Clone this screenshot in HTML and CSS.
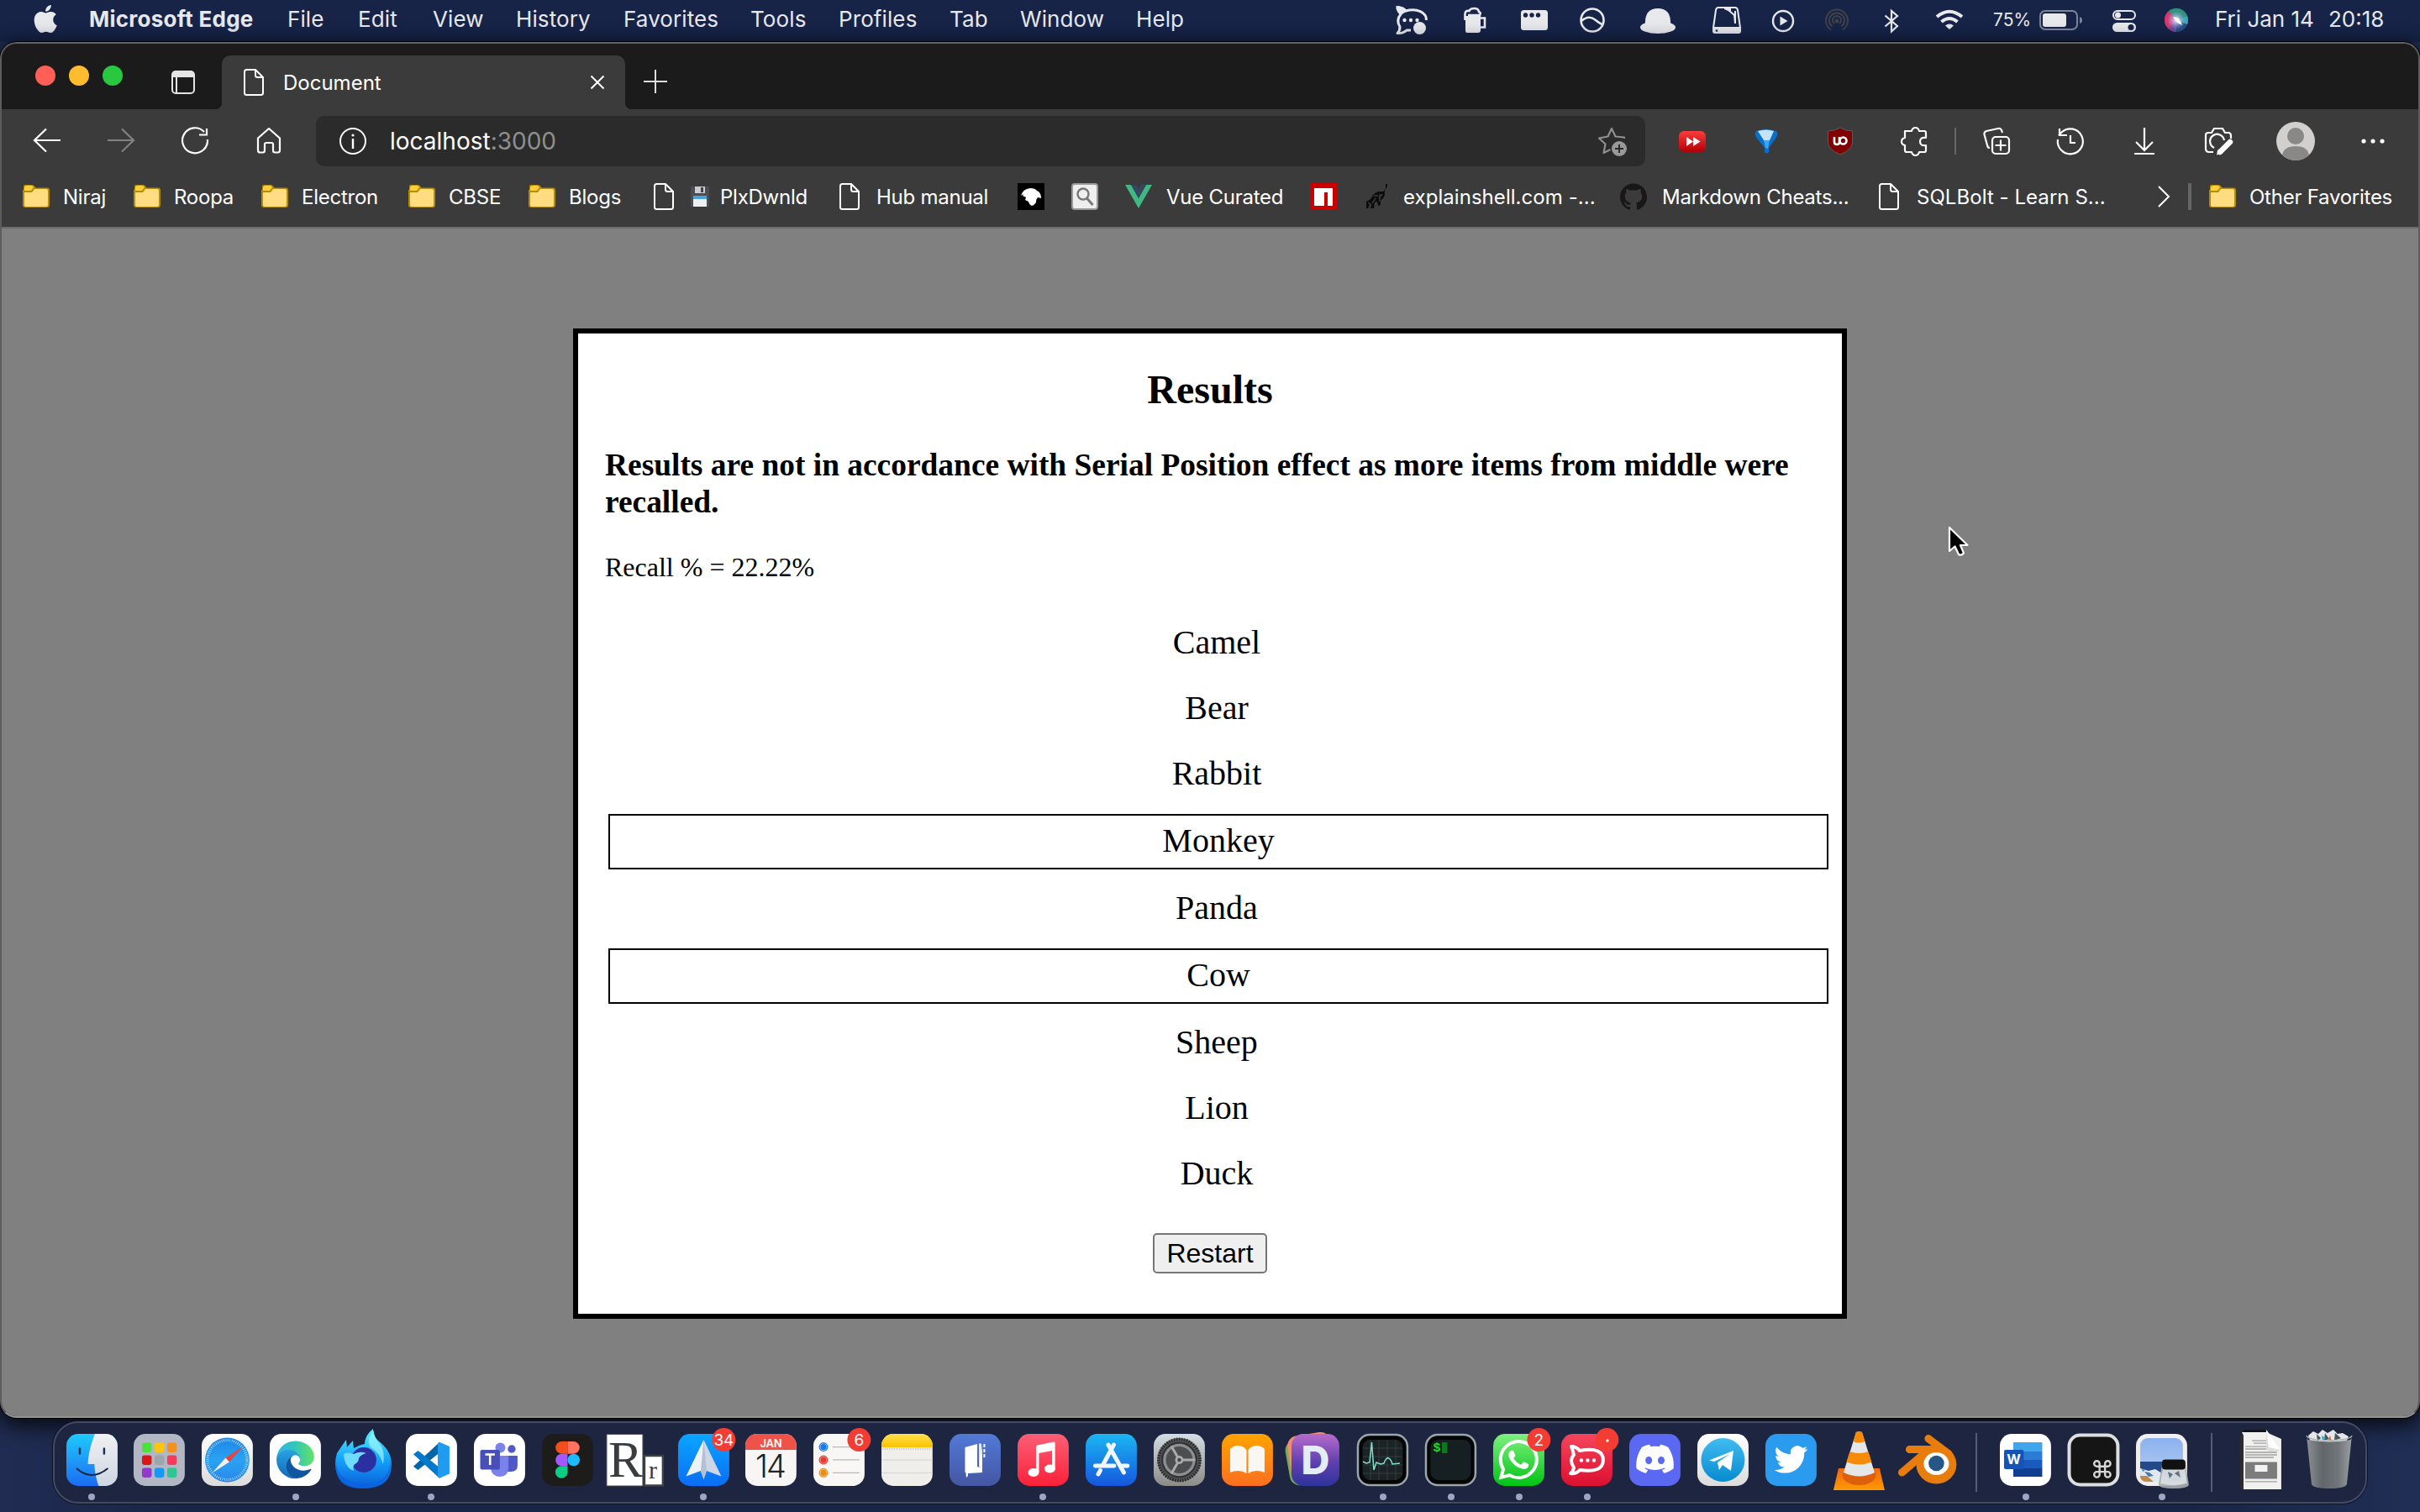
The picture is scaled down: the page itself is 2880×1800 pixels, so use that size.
FILE: index.html
```html
<!DOCTYPE html>
<html lang="en">
<head>
<meta charset="utf-8">
<title>Document</title>
<link rel="stylesheet" href="styles.css">
</head>
<body>
<svg class="defs" width="0" height="0" aria-hidden="true">
  <defs>
    <linearGradient id="gFinder" x2="0" y2="1"><stop stop-color="#1fcafd"/><stop offset="1" stop-color="#1b6df3"/></linearGradient>
    <linearGradient id="gFace" x2="0" y2="1"><stop stop-color="#f1f1f3"/><stop offset="1" stop-color="#cdd6e3"/></linearGradient>
    <linearGradient id="gWhite" x2="0" y2="1"><stop stop-color="#fff"/><stop offset="1" stop-color="#dcdcdc"/></linearGradient>
    <linearGradient id="gSafari" x2="0" y2="1"><stop stop-color="#1f86e4"/><stop offset=".5" stop-color="#2aa3f4"/><stop offset="1" stop-color="#2a86ea"/></linearGradient>
    <linearGradient id="gEdge" x2="1" y2="0"><stop stop-color="#2cb6ea"/><stop offset=".5" stop-color="#34c6b8"/><stop offset="1" stop-color="#62e464"/></linearGradient>
    <linearGradient id="gEdge2" x2="0" y2="1"><stop stop-color="#2aa5e4"/><stop offset="1" stop-color="#1568b8"/></linearGradient>
    <linearGradient id="gFox" x2="0" y2="1"><stop stop-color="#5ef0ff"/><stop offset=".5" stop-color="#16a4fb"/><stop offset="1" stop-color="#0a5cd8"/></linearGradient>
    <linearGradient id="gSpark" x2="0" y2="1"><stop stop-color="#0ba6ff"/><stop offset="1" stop-color="#0a6df5"/></linearGradient>
    <linearGradient id="gYellow" x2="0" y2="1"><stop stop-color="#ffdf4a"/><stop offset="1" stop-color="#fdc202"/></linearGradient>
    <linearGradient id="gBlueBook" x2="0" y2="1"><stop stop-color="#527ad8"/><stop offset="1" stop-color="#4456a2"/></linearGradient>
    <linearGradient id="gMusic" x2="0" y2="1"><stop stop-color="#fb5f77"/><stop offset="1" stop-color="#fa2139"/></linearGradient>
    <linearGradient id="gStore" x2="0" y2="1"><stop stop-color="#1bb6f4"/><stop offset="1" stop-color="#1657dc"/></linearGradient>
    <linearGradient id="gGrey" x2="0" y2="1"><stop stop-color="#d3dde3"/><stop offset="1" stop-color="#8d8b88"/></linearGradient>
    <linearGradient id="gBooks" x2="0" y2="1"><stop stop-color="#ffa300"/><stop offset="1" stop-color="#fb6f20"/></linearGradient>
    <linearGradient id="gDash" x2="0" y2="1"><stop stop-color="#b66ccb"/><stop offset=".55" stop-color="#5f3fb0"/><stop offset="1" stop-color="#2e339c"/></linearGradient>
    <linearGradient id="gWa" x2="0" y2="1"><stop stop-color="#7ff07f"/><stop offset="1" stop-color="#00c414"/></linearGradient>
    <linearGradient id="gRocket" x2="0" y2="1"><stop stop-color="#f5455c"/><stop offset="1" stop-color="#dc1030"/></linearGradient>
    <linearGradient id="gTele" x2="0" y2="1"><stop stop-color="#41bcf1"/><stop offset="1" stop-color="#078bd0"/></linearGradient>
    <linearGradient id="gTrash" x2="1" y2="0"><stop stop-color="#8b9094"/><stop offset=".35" stop-color="#60666a"/><stop offset=".7" stop-color="#6f7578"/><stop offset="1" stop-color="#9a9fa2"/></linearGradient>
    <linearGradient id="gBase" x2="0" y2="1"><stop stop-color="#f0680e"/><stop offset="1" stop-color="#fd9a05"/></linearGradient>
    <linearGradient id="gSky" x2="0" y2="1"><stop stop-color="#8bb1ee"/><stop offset="1" stop-color="#b7d0f2"/></linearGradient>
    <linearGradient id="gRed" x2="0" y2="1"><stop stop-color="#fb3d3d"/><stop offset="1" stop-color="#b00006"/></linearGradient>
    <radialGradient id="gSiri"><stop stop-color="#fff"/><stop offset=".35" stop-color="#c9b8ee" stop-opacity=".8"/><stop offset="1" stop-color="#8fa8e8" stop-opacity="0"/></radialGradient>
    <clipPath id="tile"><rect x="10" y="13" width="61" height="62" rx="14"/></clipPath>
    <symbol id="folder" viewBox="0 0 34 34">
      <path d="M2 9V5q0-2 2-2h8q2 0 3 1.500l1.500 2H30q3 0 3 3V27q0 3-3 3H4q-3 0-3-3V9z" fill="#b58a0b"/>
      <path d="M3 7q0-3 3-3h5q2 0 3 2l-3 4H3z" fill="#f9cf3a"/>
      <path d="M3 12h9l3-4h14q2 0 2 2v17q0 2-2 2H5q-2 0-2-2z" fill="#ffdd80"/>
    </symbol>
    <symbol id="page" viewBox="0 0 26 34">
      <path d="M4.500 2H15l9 9v18.500q0 2.500-2.500 2.500h-17Q2 32 2 29.500v-25Q2 2 4.500 2zM15 2v6.500q0 2.500 2.500 2.500H24" fill="none" stroke="#fff" stroke-width="2" stroke-linejoin="round"/>
    </symbol>
  </defs>
</svg>

<header class="menubar">
  <nav class="menus">
    <svg class="apple" width="29" height="33" viewBox="1 0 21 24" preserveAspectRatio="none"><path fill="#e7e9ed" d="M12.152 6.896c-.948 0-2.415-1.078-3.960-1.040-2.040.027-3.910 1.183-4.961 3.014-2.117 3.675-.546 9.103 1.519 12.090 1.013 1.454 2.208 3.090 3.792 3.039 1.520-.065 2.090-.987 3.935-.987 1.831 0 2.350.987 3.960.948 1.637-.026 2.676-1.480 3.676-2.948 1.156-1.688 1.636-3.325 1.662-3.415-.039-.013-3.182-1.221-3.220-4.857-.026-3.040 2.480-4.494 2.597-4.559-1.429-2.090-3.623-2.324-4.390-2.376-2-.156-3.675 1.090-4.610 1.090zM15.530 3.830c.843-1.012 1.400-2.427 1.245-3.830-1.207.052-2.662.805-3.532 1.818-.780.896-1.454 2.338-1.273 3.714 1.338.104 2.715-.688 3.559-1.701"/></svg>
    <b>Microsoft Edge</b><span>File</span><span>Edit</span><span>View</span><span>History</span><span>Favorites</span><span>Tools</span><span>Profiles</span><span>Tab</span><span>Window</span><span>Help</span>
  </nav>
  <div class="status">
    <svg width="44" height="49" viewBox="0 0 44 49" fill="none" stroke="#e7e9ed" stroke-width="3"><path d="M4.500 8.500Q12 9 15 13C28 9 40 15 39.500 24M4.500 8.500Q6 14 9 17Q3 24 8 32Q8 37 5 39.500Q12 40 16 36H21" stroke-linejoin="round"/><g fill="#e7e9ed" stroke="none"><path d="M3 7q9 0 14 6l-8 5z"/><circle cx="13.500" cy="24" r="2.200"/><circle cx="21" cy="24" r="2.200"/><circle cx="28.500" cy="24" r="2.200"/><circle cx="31.500" cy="33.500" r="7.500"/></g></svg>
    <svg width="44" height="49" viewBox="0 0 44 49" fill="none" stroke="#e7e9ed"><path d="M11 19h18v17q0 3-3 3H13q-2 0-2-3z" fill="#e7e9ed" stroke="none"/><path d="M10.500 24V17q0-5 5-4 1-3 6-3 5 0 5.500 4 3 1 1 4H14" stroke-width="2.600"/><path d="M29 21.500h5v11h-5" stroke-width="2.600"/></svg>
    <svg width="44" height="49" viewBox="0 0 44 49"><rect x="6" y="12" width="32" height="24" rx="3.500" fill="#e7e9ed"/><g fill="#172448"><circle cx="11.500" cy="18" r="2.700"/><circle cx="19" cy="18" r="2.700"/><circle cx="26.500" cy="18" r="2.700"/></g></svg>
    <svg width="44" height="49" viewBox="0 0 44 49" fill="none" stroke="#e7e9ed" stroke-width="2.600"><circle cx="22" cy="24" r="13.500"/><path d="M9 25q9-8 17-1 5 4 8 5"/></svg>
    <svg width="44" height="49" viewBox="0 0 44 49" fill="#e7e9ed"><path d="M7 29Q6 10 22 10T37 29z"/><ellipse cx="22" cy="32.500" rx="21" ry="7.500"/></svg>
    <svg width="44" height="49" viewBox="0 0 44 49"><path d="M12 9h20q2.500 0 3 3l3 21H6l3-21q.500-3 3-3z" fill="none" stroke="#e7e9ed" stroke-width="2"/><path d="M5 35q0-3 3-3h28q3 0 3 3v2q0 3-3 3H8q-3 0-3-3zM19 9h8v4q-2 1-8-2z" fill="#e7e9ed"/><path d="M24 12l7 6 1 10V13" fill="none" stroke="#e7e9ed" stroke-width="2"/><circle cx="10" cy="36.500" r="1.300" fill="#172448"/></svg>
    <svg width="44" height="49" viewBox="0 0 44 49"><circle cx="22" cy="25" r="12" fill="none" stroke="#e7e9ed" stroke-width="2.400"/><path d="M18.500 19.500v11l9-5.500z" fill="#e7e9ed"/></svg>
    <svg width="44" height="49" viewBox="0 0 44 49" fill="none" stroke="#414148" stroke-width="2"><path d="M15 35.500a13 13 0 1 1 14 0M16.500 31.500a9 9 0 1 1 11 0M19 28a5 5 0 1 1 6 0"/><circle cx="22" cy="25" r="1.500" fill="#414148"/></svg>
    <svg width="44" height="49" viewBox="0 0 44 49" fill="none" stroke="#e7e9ed" stroke-width="2.200"><path d="M14.500 18.500L29 31l-7 6.500V13l7 6L14.500 31.500"/></svg>
    <svg width="44" height="49" viewBox="0 0 44 49" fill="none" stroke="#e7e9ed" stroke-width="4"><path d="M7 20q15-12.500 30 0M12.500 26q9.500-8 19 0"/><path d="M17 30.500q5-4 10 0l-5 4.500z" fill="#e7e9ed" stroke="none"/></svg>
    <span class="pct">75%</span>
    <svg width="52" height="49" viewBox="0 0 52 49"><rect x="1" y="13" width="44" height="22" rx="6" fill="none" stroke="#7d859b" stroke-width="2"/><rect x="4" y="16" width="28" height="16" rx="3" fill="#e7e9ed"/><path d="M48 20q3 1 3 4t-3 4z" fill="#7d859b"/></svg>
    <svg width="44" height="49" viewBox="0 0 44 49"><rect x="9" y="13" width="26" height="10" rx="5" fill="none" stroke="#e7e9ed" stroke-width="2"/><circle cx="14.500" cy="18" r="3.500" fill="#e7e9ed"/><rect x="8" y="27" width="28" height="11" rx="5.500" fill="#e7e9ed"/><circle cx="30" cy="32.500" r="3.500" fill="#172448"/></svg>
    <svg width="44" height="49" viewBox="0 0 44 49"><circle cx="22" cy="24" r="14" fill="#2a4f86"/><path d="M22 24L13 34.500A14 14 0 0 1 13 13z" fill="#d8386c"/><path d="M22 24l-9-11A14 14 0 0 1 35 19z" fill="#2f9479"/><path d="M22 24l13-5q2 5 0 10z" fill="#38a9b5"/><path d="M22 24l-9 10.500q4 3.500 9 3.500z" fill="#744a9e"/><circle cx="22" cy="24" r="11" fill="url(#gSiri)"/><path d="M18 20l6 1 3 4 2 5-6-3z" fill="#fff"/></svg>
    <span>Fri Jan 14</span><span>20:18</span>
  </div>
</header>

<section class="window">
  <div class="titlebar">
    <div class="lights"><i class="close"></i><i class="min"></i><i class="max"></i></div>
    <svg class="spaces" width="28" height="28" viewBox="0 0 28 28"><rect x="1" y="1" width="26" height="26" rx="4" fill="none" stroke="#e4e4e4" stroke-width="2"/><path d="M1 8V5q0-4 4-4h18q4 0 4 4v3zM7 8v19H5V8z" fill="#e4e4e4"/></svg>
    <div class="tab">
      <svg width="26" height="34"><use href="#page"/></svg>
      <span>Document</span>
      <svg class="x" width="18" height="18" viewBox="0 0 18 18"><path d="M1.500 1.500l15 15m0-15l-15 15" stroke="#fff" stroke-width="2"/></svg>
    </div>
    <svg class="plus" width="28" height="28" viewBox="0 0 28 28"><path d="M14 0v28M0 14h28" stroke="#ddd" stroke-width="2"/></svg>
  </div>

  <div class="toolbar">
    <div class="nav">
      <svg width="44" height="44" viewBox="0 0 44 44"><path d="M38 21H8M21 7.500L7 21l14 13.500" fill="none" stroke="#fff" stroke-width="2.200"/></svg>
      <svg width="44" height="44" viewBox="0 0 44 44"><path d="M6 21h30M23 7.500L37 21 23 34.500" fill="none" stroke="#828282" stroke-width="2.200"/></svg>
      <svg width="44" height="44" viewBox="0 0 44 44"><path d="M37 20A15 15 0 1 1 33 11M36 7v7.500h-9" fill="none" stroke="#fff" stroke-width="2.200"/></svg>
      <svg width="44" height="44" viewBox="0 0 44 44"><path d="M9 18.500L22 7l13 11.500V33q0 2.500-2.500 2.500H29q-2 0-2-2.500v-7q0-2-2-2h-6q-2 0-2 2v7q0 2.500-2 2.500h-3.500Q9 35.500 9 33z" fill="none" stroke="#fff" stroke-width="2.200" stroke-linejoin="round"/></svg>
    </div>
    <div class="address">
      <svg width="44" height="44" viewBox="0 0 44 44"><circle cx="22" cy="22" r="15" fill="none" stroke="#fff" stroke-width="2"/><path d="M22 19v12" stroke="#fff" stroke-width="2.400"/><circle cx="22" cy="15" r="1.600" fill="#fff"/></svg>
      <span class="url">localhost<em>:3000</em></span>
      <svg width="44" height="44" viewBox="0 0 44 44"><path d="M37 19v-1.500l-10.500-1L22 7l-4.500 9.500L7 18.500l7.500 7-2 10.500 8-4" fill="none" stroke="#8f8f8f" stroke-width="2.200" stroke-linejoin="round"/><circle cx="31" cy="31" r="9" fill="#989898"/><path d="M31 26v10M26 31h10" stroke="#2b2b2b" stroke-width="2"/></svg>
    </div>
    <div class="tools">
      <svg width="44" height="44" viewBox="0 0 44 44"><rect x="6" y="10" width="32" height="25" rx="6" fill="url(#gRed)"/><path d="M15 17l8 5.500-8 5.500zM23 17l8.500 5.500L23 28z" fill="#fff"/></svg>
      <svg width="44" height="44" viewBox="0 0 44 44"><path d="M10 10q12-4 24 0 3 3-1 9l-8 11v5q-3 3-5 0v-5l-9-11q-4-6-1-9z" fill="#0a6fcb"/><path d="M12 10q10-3 19 0l-5 11h-7z" fill="#c4e4fd"/><path d="M19 21h7l-2 10-3-1z" fill="#37a6f7"/></svg>
      <svg width="44" height="44" viewBox="0 0 44 44"><path d="M22 6q6 4 14.500 4v13q0 9-14.500 15Q7.500 32 7.500 23V10Q16 10 22 6z" fill="#800000" stroke="#5f5a5a"/><path d="M15 17v6q0 3 3 3t3-3v-6m0 4.500" fill="none" stroke="#fff" stroke-width="2.600"/><circle cx="25.500" cy="21.500" r="4" fill="none" stroke="#fff" stroke-width="2.600"/></svg>
      <svg width="44" height="44" viewBox="0 0 44 44"><path d="M11 10h8q1-4 4.500-4T28 10h6q2 0 2 2v6q-7-1-7 4.500T36 27v6q0 2-2 2h-6q-1 4-4.500 4T19 35h-6q-2 0-2-2v-6q-4-1-4-4.500T11 18z" fill="none" stroke="#fff" stroke-width="2.200" stroke-linejoin="round"/></svg>
      <i class="rule"></i>
      <svg width="44" height="44" viewBox="0 0 44 44" fill="none" stroke="#fff" stroke-width="2.200"><rect x="17" y="17" width="20" height="20" rx="4"/><path d="M27 20.500v13M20.500 27h13M29 12l-1-3q-1-2.500-4-2L10 10q-3 1-2.500 4L11 27q.500 3 3 3"/></svg>
      <svg width="44" height="44" viewBox="0 0 44 44" fill="none" stroke="#fff" stroke-width="2.200"><path d="M7 20a15 15 0 1 0 5-9l-4 4M9 7v8h9M22 15v9h6"/></svg>
      <svg width="44" height="44" viewBox="0 0 44 44" fill="none" stroke="#fff" stroke-width="2.200"><path d="M22 6v27M12 23l10 10 10-10M10 37h24"/></svg>
      <svg width="44" height="44" viewBox="0 0 44 44" fill="none" stroke="#fff" stroke-width="2.200"><path d="M16 35h-5q-4 0-4-4V15q0-3 3-3h4l3-5h10l3 5h4q3 0 3 4v3M17 30a8.500 8.500 0 1 1 12-9"/><path d="M36 23L24 35" stroke-width="6.500" stroke-linecap="round"/><path d="M20 38.500l2-7 5 5z" fill="#fff" stroke="none"/></svg>
      <svg width="46" height="46" viewBox="0 0 46 46"><circle cx="23" cy="23" r="23" fill="#d2d0ce"/><circle cx="23" cy="17" r="10" fill="#8a8886"/><path d="M7 39.500Q9 29 23 29t16 10.500A23 23 0 0 1 7 39.500z" fill="#8a8886"/></svg>
      <svg width="44" height="44" viewBox="0 0 44 44" fill="#fff"><circle cx="11" cy="22" r="2.600"/><circle cx="22" cy="22" r="2.600"/><circle cx="33" cy="22" r="2.600"/></svg>
    </div>
  </div>

  <div class="bookmarks">
    <svg width="34" height="34"><use href="#folder"/></svg><span>Niraj</span>
    <svg width="34" height="34"><use href="#folder"/></svg><span>Roopa</span>
    <svg width="34" height="34"><use href="#folder"/></svg><span>Electron</span>
    <svg width="34" height="34"><use href="#folder"/></svg><span>CBSE</span>
    <svg width="34" height="34"><use href="#folder"/></svg><span>Blogs</span>
    <svg width="26" height="34"><use href="#page"/></svg>
    <svg width="24" height="26" viewBox="0 0 24 26"><path d="M1 1h22v24H1z" fill="#4a4d52"/><path d="M6 1h12v8H6z" fill="#c9ccd0"/><path d="M13 2h3v6h-3z" fill="#444"/><path d="M4 12h16v13H4z" fill="#eef1f4"/><path d="M4 12h16v4H4z" fill="#4aa3e0"/></svg>
    <span>PlxDwnld</span>
    <svg width="26" height="34"><use href="#page"/></svg><span>Hub manual</span>
    <svg width="32" height="32" viewBox="0 0 32 32"><path d="M0 0h32v32H0z" fill="#000"/><path d="M4 15Q6 7 15 6q6 0 8 3 5 2 5 9l-4-1q-2 2-2 6-2 3-5 4-3-1-4-5l-4-2 1-3-4-2 1-2z" fill="#fff"/></svg>
    <svg width="32" height="32" viewBox="0 0 32 32"><rect x="1" y="1" width="30" height="30" rx="3" fill="#eee" stroke="#999" stroke-width="2"/><circle cx="14" cy="13" r="6.500" fill="none" stroke="#777" stroke-width="2.400"/><path d="M18.500 18l7 8" stroke="#777" stroke-width="3"/></svg>
    <svg width="32" height="32" viewBox="0 0 32 32"><path d="M0 2h7l9 16 9-16h7L16 30z" fill="#41b883"/><path d="M7 2h6l3 5.500L19 2h6l-9 16z" fill="#35495e"/></svg><span>Vue Curated</span>
    <svg width="32" height="32" viewBox="0 0 32 32"><path d="M0 0h32v32H0z" fill="#cb0000"/><path d="M5 6h22v21h-6V11h-4v16H5z" fill="#fff"/></svg>
    <svg width="32" height="32" viewBox="0 0 32 32"><path d="M26 1v6l-3 3h-6l-5 3-4 6-5 3v8h2l2-5 2 1-1 4h4l1-7 3-1 1 5 3-1v-5l3-3 2-4v-5l3-5V1z" fill="#0c0c0c"/><path d="M22 13l-4 5m-4 0l-4 6m2-9h5m2-2v9M5 23l4 3" stroke="#3b3b3b" stroke-width="1.500"/></svg><span class="long">explainshell.com -...</span>
    <svg width="32" height="32" viewBox="0 0 24 24"><path fill="#181616" d="M12 .297c-6.630 0-12 5.373-12 12 0 5.303 3.438 9.800 8.205 11.385.600.113.820-.258.820-.577 0-.285-.010-1.040-.015-2.040-3.338.724-4.042-1.610-4.042-1.610C4.422 18.070 3.633 17.700 3.633 17.700c-1.087-.744.084-.729.084-.729 1.205.084 1.838 1.236 1.838 1.236 1.070 1.835 2.809 1.305 3.495.998.108-.776.417-1.305.760-1.605-2.665-.300-5.466-1.332-5.466-5.930 0-1.310.465-2.380 1.235-3.220-.135-.303-.540-1.523.105-3.176 0 0 1.005-.322 3.300 1.230.960-.267 1.980-.399 3-.405 1.020.006 2.040.138 3 .405 2.280-1.552 3.285-1.230 3.285-1.230.645 1.653.240 2.873.120 3.176.765.840 1.230 1.910 1.230 3.220 0 4.610-2.805 5.625-5.475 5.920.420.360.810 1.096.810 2.220 0 1.606-.015 2.896-.015 3.286 0 .315.210.690.825.570C20.565 22.092 24 17.592 24 12.297c0-6.627-5.373-12-12-12"/></svg><span>Markdown Cheats...</span>
    <svg width="26" height="34"><use href="#page"/></svg><span class="long">SQLBolt - Learn S...</span>
    <svg width="16" height="26" viewBox="0 0 16 26"><path d="M2 1l12 12L2 25" fill="none" stroke="#fff" stroke-width="2"/></svg>
    <i class="rule wide"></i>
    <svg width="34" height="34"><use href="#folder"/></svg><span>Other Favorites</span>
  </div>

  <main class="page">
    <div class="card">
      <h2>Results</h2>
      <h3>Results are not in accordance with Serial Position effect as more items from middle were recalled.</h3>
      <p>Recall % = 22.22%</p>
      <ul>
        <li>Camel</li><li>Bear</li><li>Rabbit</li><li class="hit">Monkey</li><li>Panda</li><li class="hit">Cow</li><li>Sheep</li><li>Lion</li><li>Duck</li>
      </ul>
      <button type="button">Restart</button>
    </div>
    <svg class="cursor" width="30" height="42" viewBox="0 0 30 42"><path d="M2 2v28l6.500-5.500 4.500 9.500q3 2 6-1.500l-4-9.500h8.500z" fill="#000" stroke="#fff" stroke-width="2.200" stroke-linejoin="round"/></svg>
  </main>
</section>

<footer class="dock">
  <div class="app on"><svg viewBox="0 0 81 94"><g clip-path="url(#tile)"><path d="M10 13h61v62H10z" fill="url(#gFinder)"/><path d="M44 13C38 28 36 40 35.600 49H43.500C43.500 58 46 68 48.500 75H75V13z" fill="url(#gFace)"/></g><path d="M26 30.500v6M55 30.500v6" stroke="#1c3350" stroke-width="2.500" stroke-linecap="round"/><path d="M22 54q18 16 37.500 0" fill="none" stroke="#13243c" stroke-width="2"/></svg></div>
  <div class="app"><svg viewBox="0 0 81 94"><rect x="10" y="13" width="61" height="62" rx="14" fill="#b3b7c3"/><g><rect x="20" y="23.500" width="11.500" height="11.500" rx="2.500" fill="#4be23c"/><rect x="35" y="23.500" width="11.500" height="11.500" rx="2.500" fill="#fdc50f"/><rect x="50" y="23.500" width="11.500" height="11.500" rx="2.500" fill="#f6901c"/><rect x="20" y="38.500" width="11.500" height="11.500" rx="2.500" fill="#db1616"/><rect x="35" y="38.500" width="11.500" height="11.500" rx="2.500" fill="#9da6ab"/><rect x="50" y="38.500" width="11.500" height="11.500" rx="2.500" fill="#fb3a5b"/><rect x="20" y="53.500" width="11.500" height="11.500" rx="2.500" fill="#9138cd"/><rect x="35" y="53.500" width="11.500" height="11.500" rx="2.500" fill="#1a96f4"/><rect x="50" y="53.500" width="11.500" height="11.500" rx="2.500" fill="#2cc692"/></g></svg></div>
  <div class="app"><svg viewBox="0 0 81 94"><rect x="10" y="13" width="61" height="62" rx="14" fill="url(#gWhite)"/><circle cx="40.500" cy="44" r="26.500" fill="url(#gSafari)"/><circle cx="40.500" cy="44" r="23.500" fill="none" stroke="#cfe8fb" stroke-width="3" stroke-dasharray=".7 1.760"/><path d="M59 28L38.500 41.500l4.500 5z" fill="#e8433c"/><path d="M22.500 59.500l16-18 4.500 5z" fill="#f3f3f3"/></svg></div>
  <div class="app on"><svg viewBox="0 0 81 94"><rect x="10" y="13" width="61" height="62" rx="14" fill="#fff"/><g transform="translate(17.200 20.500) scale(.1755)"><path fill="#0f559f" d="M235.680 195.460a93.730 93.730 0 0 1-10.540 4.710 101.870 101.870 0 0 1-35.900 6.460c-47.320 0-88.540-32.550-88.540-74.320A31.480 31.480 0 0 1 117.130 105c-42.800 1.800-53.800 46.400-53.800 72.530 0 73.880 68.090 81.370 82.760 81.370 7.910 0 19.840-2.300 27-4.560l1.310-.440A128.340 128.340 0 0 0 241 201.100a4 4 0 0 0-5.320-5.640Z"/><path fill="url(#gEdge2)" d="M110.340 246.340A79.200 79.200 0 0 1 87.600 225a80.720 80.720 0 0 1 29.530-120c3.120-1.470 8.450-4.130 15.540-4a32.350 32.350 0 0 1 25.690 13 31.880 31.880 0 0 1 6.360 18.660c0-.210 24.460-79.600-80-79.600-43.900 0-80 41.660-80 78.210a130.150 130.150 0 0 0 12.110 56 128 128 0 0 0 156.380 67.110 75.550 75.550 0 0 1-62.780-8z"/><path fill="url(#gEdge)" d="M156.940 153.780c-.810 1.050-3.300 2.500-3.300 5.660 0 2.610 1.700 5.120 4.720 7.230 14.380 10 41.490 8.680 41.560 8.680a59.560 59.560 0 0 0 30.270-8.350A61.380 61.380 0 0 0 260.620 114c.260-22.410-8-37.310-11.340-43.910C228.090 28.760 182.350 5 132.610 5a128 128 0 0 0-128 126.200C5.100 94.680 41.390 65.200 84.610 65.200c3.500 0 23.460.340 42 10.070 16.340 8.580 24.900 18.940 30.850 29.210 6.180 10.670 7.280 24.150 7.280 29.520S162 147.340 156.940 153.780Z"/></g></svg></div>
  <div class="app"><svg viewBox="0 0 81 94"><path d="M9 36l4-6 7-10 1 9 7-8 1 9q7-4 13-5 0-10 10-18 0 8 6 14 16 12 16 28 0 29-33 29T7 49q0-6 2-13z" fill="url(#gFox)"/><path d="M8 45Q8 70 40 72T73 44q3 33-33 34T8 45z" fill="#0b62e3" opacity=".7"/><circle cx="41" cy="44" r="15" fill="#2b2f9f"/><path d="M17 37q5-3 12 0 7-4 15-1-7 2-9 6 0 4-3 6-5 2-3 9-11-4-12-20z" fill="#6fdcff"/><path d="M53 9q0 9 7 16 7 9 4 24-4-14-15-20-6-9 4-20z" fill="#9af6ff" opacity=".7"/></svg></div>
  <div class="app on"><svg viewBox="0 0 81 94"><rect x="10" y="13" width="61" height="62" rx="14" fill="#fff"/><path d="M50 23v12.500L24.500 56l-5.500-4.200z" fill="#0065a9"/><path d="M50 65.700V53L24.500 33 19 37.200z" fill="#0379cc"/><path d="M50 22.700L62 28v32.500L50 65.700q-2-1-2-2.500V25q0-1.500 2-2.300z" fill="#1f9cf0"/></svg></div>
  <div class="app"><svg viewBox="0 0 81 94"><rect x="10" y="13" width="61" height="62" rx="14" fill="#fff"/><circle cx="55" cy="31" r="4.700" fill="#5059c9"/><path d="M49 39h13v12q0 7-8 7h-5z" fill="#5059c9"/><circle cx="41.500" cy="29.500" r="6" fill="#7b83eb"/><path d="M30 39h21v15q0 10-10 10T30 54z" fill="#7b83eb"/><rect x="17.500" y="32" width="23.500" height="23.500" rx="2" fill="#484fb8"/><path d="M23.500 37.500h11.500M29.250 37v13" stroke="#fff" stroke-width="2.600"/></svg></div>
  <div class="app"><svg viewBox="0 0 81 94"><rect x="10" y="13" width="61" height="62" rx="14" fill="#1e1c1b"/><path d="M40.500 22v14.700h-7a7.300 7.300 0 0 1 0-14.700z" fill="#f24e1e"/><path d="M40.500 22h7a7.300 7.300 0 0 1 0 14.700h-7z" fill="#ff7262"/><path d="M40.500 36.700v14.600h-7a7.300 7.300 0 0 1 0-14.600z" fill="#a259ff"/><circle cx="47.800" cy="44" r="7.300" fill="#1abcfe"/><path d="M40.500 51.300v7.400a7.300 7.300 0 1 1-7-7.400z" fill="#0acf83"/></svg></div>
  <div class="app"><svg viewBox="0 0 81 94"><path d="M6 13.500h43V75H6z" fill="#fff" stroke="#555"/><path d="M51 39h22v35.500H51z" fill="#fff" stroke="#3d4043" stroke-width="2.500"/><text class="serif" x="8" y="64" font-size="61" textLength="41" lengthAdjust="spacingAndGlyphs" fill="#3a3d3f">R</text><text class="serif" x="56" y="66" font-size="30" fill="#3a3d3f">r</text></svg></div>
  <div class="app on"><svg viewBox="0 0 81 94"><rect x="10" y="13" width="61" height="62" rx="14" fill="url(#gSpark)"/><path d="M40.500 20L19.500 63.500 37 57l3.500 10z" fill="#eef1f6"/><path d="M40.500 20l21 43.500L44 57l-3.500 10z" fill="#cfd7e6"/><path d="M40.500 20L37 57l3.500 10L44 57z" fill="#b4c0d6"/><circle class="bd" cx="64.500" cy="20" r="14"/><text class="bt" x="64.500" y="26.500">34</text></svg></div>
  <div class="app"><svg viewBox="0 0 81 94"><g clip-path="url(#tile)"><path d="M10 13h61v62H10z" fill="#f7f6f4"/><path d="M10 13h61v19H10z" fill="#ee5249"/></g><text x="40.500" y="28.500" text-anchor="middle" font-size="13" font-weight="600" letter-spacing="-.3" fill="#fff">JAN</text><text x="39.500" y="65" text-anchor="middle" font-size="38" font-weight="300" letter-spacing="-2" fill="#222">14</text></svg></div>
  <div class="app"><svg viewBox="0 0 81 94"><rect x="10" y="13" width="61" height="62" rx="14" fill="#f8f7f5"/><g fill="none" stroke-width="1.300"><g stroke="#1478f0"><circle cx="22" cy="28.500" r="4.800"/><circle cx="22" cy="28.500" r="3" fill="#1478f0"/></g><g stroke="#ea3a2e"><circle cx="22" cy="44" r="4.800"/><circle cx="22" cy="44" r="3" fill="#ea3a2e"/></g><g stroke="#ee8a12"><circle cx="22" cy="59.300" r="4.800"/><circle cx="22" cy="59.300" r="3" fill="#ee8a12"/></g></g><path d="M33 28.500h31M33 43.800h32M33 59.300h32" stroke="#b9b9b8" stroke-width="1.300"/><circle class="bd" cx="64.500" cy="20" r="14"/><text class="bt" x="64.500" y="26.500">6</text></svg></div>
  <div class="app"><svg viewBox="0 0 81 94"><g clip-path="url(#tile)"><path d="M10 13h61v62H10z" fill="#efeeea"/><path d="M10 13h61v16H10z" fill="url(#gYellow)"/></g><path d="M11 31h60" stroke="#bbb" stroke-width="1.500" stroke-dasharray="1.200 1.600"/><path d="M10 44h61M10 59.500h61" stroke="#d4d3cf"/></svg></div>
  <div class="app"><svg viewBox="0 0 81 94"><rect x="10" y="13" width="61" height="62" rx="14" fill="url(#gBlueBook)"/><path d="M28.500 29L43 25v27l3 1 3-28v34L32 60v3l-2 2-.500-6h-1z" fill="#fff"/><path d="M46.500 24.500v28" stroke="#fff" stroke-width="2.500"/><path d="M51.500 25v18" stroke="#fff" stroke-width="2" stroke-dasharray="4 2"/></svg></div>
  <div class="app on"><svg viewBox="0 0 81 94"><rect x="10" y="13" width="61" height="62" rx="14" fill="url(#gMusic)"/><path d="M32 28.500q0-1.500 1.500-2l19.500-4q1.700-.300 1.700 1.500V54h-3.500V33L35.500 36v23H32z" fill="#fff"/><ellipse cx="29" cy="59" rx="6.500" ry="5" fill="#fff"/><ellipse cx="48.500" cy="54.500" rx="6.500" ry="5" fill="#fff"/></svg></div>
  <div class="app"><svg viewBox="0 0 81 94"><rect x="10" y="13" width="61" height="62" rx="14" fill="url(#gStore)"/><path d="M43.500 26L30 51M37 26l18.500 33M21.500 51H44M54 51h6M27.500 56.500L25 61" fill="none" stroke="#f2f7fd" stroke-width="5" stroke-linecap="round"/></svg></div>
  <div class="app"><svg viewBox="0 0 81 94"><rect x="10" y="13" width="61" height="62" rx="14" fill="url(#gGrey)"/><circle cx="40.500" cy="44" r="26" fill="#5e6062"/><circle cx="40.500" cy="44" r="24.500" fill="none" stroke="#2b2c2d" stroke-width="4" stroke-dasharray="1.800 1.200"/><circle cx="40.500" cy="44" r="20.500" fill="#8d8f90" stroke="#333" stroke-width="2.500"/><circle cx="40.500" cy="44" r="16" fill="#4c4e50"/><path d="M40.500 44h19M40.500 44l-9.500-16.500M40.500 44L31 60.500" stroke="#a9abac" stroke-width="3"/><circle cx="40.500" cy="44" r="5" fill="#aaacad"/><circle cx="40.500" cy="44" r="2.200" fill="#444"/></svg></div>
  <div class="app"><svg viewBox="0 0 81 94"><rect x="10" y="13" width="61" height="62" rx="14" fill="url(#gBooks)"/><path d="M39.500 32q-4-5-10-5t-9.500 4V59q4-2 9.500-2t10 3zM41.500 32q4-5 10-5t9.500 4V59q-4-2-9.500-2t-10 3z" fill="#faf7f3"/></svg></div>
  <div class="app"><svg viewBox="0 0 81 94"><rect x="7" y="18" width="52" height="54" rx="12" fill="#7ca85a" transform="rotate(-10 33 45)"/><rect x="10" y="13" width="52" height="56" rx="12" fill="#ef8f70" transform="rotate(-9 35 44)"/><rect x="12" y="13" width="57" height="62" rx="14" fill="url(#gDash)"/><text x="40.500" y="61" text-anchor="middle" font-size="47" font-weight="800" fill="#e3edf6">D</text></svg></div>
  <div class="app on"><svg viewBox="0 0 81 94"><rect x="11" y="14" width="59" height="60" rx="14" fill="#050505" stroke="#9aa5ad" stroke-width="2.500"/><rect x="16.500" y="20" width="48" height="48" rx="9" fill="#1b2325"/><path d="M26 20v48M36 20v48M46 20v48M56 20v48M17 30h47M17 40h47M17 50h47M17 60h47" stroke="#3a4547" stroke-width=".8"/><path d="M17 46l4 2 4-1 2.500-24L30 56l3-9 5 2 4-1q3-8 6-6t4 7l9-1" fill="none" stroke="#7fe0cb" stroke-width="1.500"/></svg></div>
  <div class="app on"><svg viewBox="0 0 81 94"><rect x="11" y="14" width="59" height="60" rx="14" fill="#050505" stroke="#9aa5ad" stroke-width="2.500"/><rect x="16.500" y="20" width="48" height="48" rx="9" fill="#161f22"/><text class="mono" x="19.500" y="34" font-size="15" fill="#16e01b">$</text><path d="M30 23h6.500v13H30z" fill="#0b7a1a"/></svg></div>
  <div class="app on"><svg viewBox="0 0 81 94"><rect x="10" y="13" width="61" height="62" rx="14" fill="url(#gWa)"/><path transform="translate(16.500 20) scale(1.980)" fill="#fff" d="M17.472 14.382c-.297-.149-1.758-.867-2.030-.967-.273-.099-.471-.148-.670.150-.197.297-.767.966-.940 1.164-.173.199-.347.223-.644.075-.297-.150-1.255-.463-2.390-1.475-.883-.788-1.480-1.761-1.653-2.059-.173-.297-.018-.458.130-.606.134-.133.298-.347.446-.520.149-.174.198-.298.298-.497.099-.198.050-.371-.025-.520-.075-.149-.669-1.612-.916-2.207-.242-.579-.487-.500-.669-.510-.173-.008-.371-.010-.570-.010-.198 0-.520.074-.792.372-.272.297-1.040 1.016-1.040 2.479 0 1.462 1.065 2.875 1.213 3.074.149.198 2.096 3.200 5.077 4.487.709.306 1.262.489 1.694.625.712.227 1.360.195 1.871.118.571-.085 1.758-.719 2.006-1.413.248-.694.248-1.289.173-1.413-.074-.124-.272-.198-.570-.347m-5.421 7.403h-.004a9.870 9.870 0 0 1-5.031-1.378l-.361-.214-3.741.982.998-3.648-.235-.374a9.860 9.860 0 0 1-1.510-5.260c.001-5.450 4.436-9.884 9.888-9.884 2.640 0 5.122 1.030 6.988 2.898a9.825 9.825 0 0 1 2.893 6.994c-.003 5.450-4.437 9.884-9.885 9.884m8.413-18.297A11.815 11.815 0 0 0 12.050 0C5.495 0 .160 5.335.157 11.892c0 2.096.547 4.142 1.588 5.945L.057 24l6.305-1.654a11.882 11.882 0 0 0 5.683 1.448h.005c6.554 0 11.890-5.335 11.893-11.893a11.821 11.821 0 0 0-3.480-8.413z"/><circle class="bd" cx="64.500" cy="20" r="14"/><text class="bt" x="64.500" y="26.500">2</text></svg></div>
  <div class="app on"><svg viewBox="0 0 81 94"><rect x="10" y="13" width="61" height="62" rx="14" fill="url(#gRocket)"/><path d="M22 28q6 0 10 5 28-5 28 11T32 56q-4 5-11 4 4-3 4-7-6-9 0-15-1-6-3-10z" fill="none" stroke="#fff" stroke-width="4" stroke-linejoin="round"/><g fill="#fff"><circle cx="34" cy="44.500" r="2.200"/><circle cx="41.500" cy="44.500" r="2.200"/><circle cx="49" cy="44.500" r="2.200"/></g><circle class="bd" cx="64.500" cy="20" r="14"/><circle cx="65" cy="21" r="1.700" fill="#fff"/></svg></div>
  <div class="app"><svg viewBox="0 0 81 94"><rect x="10" y="13" width="61" height="62" rx="14" fill="#5b69f2"/><path transform="translate(18.300 20.500) scale(1.860)" fill="#fff" d="M20.317 4.370a19.791 19.791 0 0 0-4.885-1.515.074.074 0 0 0-.079.037c-.211.375-.445.865-.608 1.250-1.845-.276-3.680-.276-5.487 0-.164-.393-.406-.874-.618-1.250a.077.077 0 0 0-.079-.037 19.736 19.736 0 0 0-4.885 1.515.070.070 0 0 0-.032.028C.533 9.046-.319 13.580.099 18.058a.082.082 0 0 0 .031.056c2.053 1.508 4.041 2.423 5.993 3.029a.078.078 0 0 0 .084-.028c.462-.630.873-1.295 1.226-1.994a.076.076 0 0 0-.042-.106c-.653-.248-1.274-.550-1.872-.892a.077.077 0 0 1-.008-.128c.126-.094.252-.192.372-.291a.074.074 0 0 1 .078-.011c3.928 1.793 8.180 1.793 12.061 0a.074.074 0 0 1 .079.010c.120.099.246.198.373.292a.077.077 0 0 1-.007.128 12.299 12.299 0 0 1-1.873.891.077.077 0 0 0-.041.107c.360.698.772 1.363 1.225 1.993a.076.076 0 0 0 .084.029c1.961-.607 3.950-1.522 6.002-3.029a.077.077 0 0 0 .031-.055c.500-5.177-.838-9.674-3.549-13.660a.061.061 0 0 0-.031-.029zM8.020 15.331c-1.183 0-2.157-1.086-2.157-2.419s.956-2.419 2.157-2.419c1.211 0 2.176 1.095 2.157 2.419 0 1.333-.956 2.419-2.157 2.419zm7.975 0c-1.183 0-2.157-1.086-2.157-2.419s.955-2.419 2.157-2.419c1.211 0 2.176 1.095 2.157 2.419 0 1.333-.946 2.419-2.157 2.419Z"/></svg></div>
  <div class="app"><svg viewBox="0 0 81 94"><rect x="10" y="13" width="61" height="62" rx="14" fill="url(#gWhite)"/><circle cx="40.500" cy="44" r="26" fill="url(#gTele)"/><path d="M24 44.500L53 33l-3 24-10-7-4 6-2-9 15-10-19 9z" fill="#fff"/></svg></div>
  <div class="app"><svg viewBox="0 0 81 94"><rect x="10" y="13" width="61" height="62" rx="14" fill="#2a9bee"/><path transform="translate(20.500 23.500) scale(1.660)" fill="#fff" d="M23.953 4.570a10 10 0 0 1-2.825.775 4.958 4.958 0 0 0 2.163-2.723c-.951.555-2.005.959-3.127 1.184a4.920 4.920 0 0 0-8.384 4.482C7.690 8.095 4.067 6.130 1.640 3.162a4.822 4.822 0 0 0-.666 2.475c0 1.710.870 3.213 2.188 4.096a4.904 4.904 0 0 1-2.228-.616v.060a4.923 4.923 0 0 0 3.946 4.827 4.996 4.996 0 0 1-2.212.085 4.936 4.936 0 0 0 4.604 3.417 9.867 9.867 0 0 1-6.102 2.105c-.390 0-.779-.023-1.170-.067a13.995 13.995 0 0 0 7.557 2.209c9.053 0 13.998-7.496 13.998-13.985 0-.210 0-.420-.015-.630A9.935 9.935 0 0 0 24 4.590z"/></svg></div>
  <div class="app"><svg viewBox="0 0 81 94"><path d="M16 54h49l6 26H10z" fill="url(#gBase)"/><ellipse cx="40.500" cy="62" rx="20" ry="12" fill="#dc5f0c"/><path d="M37 11q3.500-1.500 7 0l15 48q-18 9-37 0z" fill="#e4e6e8"/><path d="M37 11q3.500-1.500 7 0l3.500 11q-7 3-14 0zM29.500 34q11 4 22 0l4 12.500q-15 6-30 0z" fill="#f78b08"/></svg></div>
  <div class="app"><svg viewBox="0 0 81 94"><path d="M42 18.500l24 18M19.500 31.500H55M10.500 59L34 39" stroke="#e87d0d" stroke-width="9" stroke-linecap="round"/><ellipse cx="51.500" cy="49.500" rx="24" ry="23" fill="#e87d0d"/><ellipse cx="51.500" cy="48.500" rx="15" ry="13.500" fill="#fff"/><circle cx="51.500" cy="48" r="9.300" fill="#265787"/></svg></div>
  <i class="split"></i>
  <div class="app on"><svg viewBox="0 0 81 94"><rect x="10" y="13" width="61" height="62" rx="14" fill="#fff"/><path d="M26 23h34.500v11H26z" fill="#41a5ee"/><path d="M26 34h34.500v10H26z" fill="#2b7cd3"/><path d="M26 44h34.500v10H26z" fill="#185abd"/><path d="M26 54h34.500v10H26z" fill="#103f91"/><rect x="15" y="32" width="23.500" height="23" rx="2" fill="#1553b5"/><text x="26.700" y="49.500" text-anchor="middle" font-size="16" font-weight="700" fill="#fff">W</text></svg></div>
  <div class="app"><svg viewBox="0 0 81 94"><rect x="11.500" y="14.500" width="58" height="59" rx="13" fill="#151515" stroke="#dcdfe2" stroke-width="4"/><path transform="translate(38 42) scale(1.080)" d="M18 3a3 3 0 0 0-3 3v12a3 3 0 1 0 3-3H6a3 3 0 1 0 3 3V6a3 3 0 1 0-3 3h12a3 3 0 0 0 0-6z" fill="none" stroke="#d6d6d6" stroke-width="2.200"/></svg></div>
  <div class="app on"><svg viewBox="0 0 81 94"><rect x="10" y="13" width="61" height="62" rx="14" fill="#f0efee"/><rect x="15" y="18" width="51" height="52" rx="9" fill="url(#gSky)"/><path d="M15 46h51v14q0 10-9 10H24q-9 0-9-9z" fill="#234a86"/><path d="M15 54l10 3 8-2 10 6 8 3-4 6H24q-9 0-9-9z" fill="#dfe9ef"/><path d="M20 58l6 1 5 4-6 1zM17 55l4 1-3 2z" fill="#4d79a8"/><path d="M15 63l8 0 8 7h-7q-9 0-9-7z" fill="#c08a4a"/><path d="M41 50l-4 23q0 5 18 5t18-5l-4-23z" fill="#a8adb0" opacity=".9"/><path d="M42 55l-3 17q16 4 32 0l-3-17z" fill="#dfe5e8" opacity=".8"/><path d="M48 58l6 3-4 5zM56 60l5-3 2 8z" fill="#5f7385"/><rect x="41" y="43.500" width="28" height="12" rx="4" fill="#111"/></svg></div>
  <i class="split"></i>
  <div class="app"><svg viewBox="0 0 81 94"><path d="M20 8h28v8H20z" fill="#14161c"/><path d="M16 15h8v63h-8z" fill="#2d2d2e"/><path d="M18 11h29l18 8v60H20V15z" fill="#f1f1f0"/><path d="M22 46.500h38v20H22z" fill="#7c7c7c"/><path d="M33.500 50h15v8h-15z" fill="#f2f2f2"/><path d="M30 21h20M32 24h18M22 28h38M22 31h38M22 35h38M22 38h38M22 41h34M22 70h38" stroke="#a0a0a0" stroke-width="1.300"/><path d="M47 8l17 24q-10 4-17 0z" fill="#dcdddd"/><path d="M47 8l17 24-14-3z" fill="#fff"/></svg></div>
  <div class="app"><svg viewBox="0 0 81 94"><path d="M16 15l6-5 6 3 5-5 6 4 7-4 5 5 6-1 7 4-4 10H20z" fill="#e5e6e7"/><path d="M26 13l5 5-4 4zM36 12l5 7-6 2zM48 12l7 6-8 3z" fill="#4b5560"/><path d="M32 15l5 3-4 3z" fill="#20b0d8"/><path d="M40 20l2-5 2 7z" fill="#e2692b"/><path d="M14 15q0 4 2 5 24 5 50 0 2-1 2-5l-6 58q-2 5-21 5t-21-5z" fill="url(#gTrash)"/><path d="M14 15q1 5 27 6 26-1 27-6" fill="none" stroke="#aeb3b6" stroke-width="1.500"/></svg></div>
</footer>
</body>
</html>
```
FILE: styles.css
```css
* { box-sizing: border-box; }

body {
  margin: 0;
  width: 2880px;
  height: 1800px;
  overflow: hidden;
  display: grid;
  grid-template-rows: 50px 1638px 112px;
  font-family: Inter, "Liberation Sans", sans-serif;
  background: linear-gradient(90deg, #202c51 0, #182548 8%, #182548 90%, #202e55 100%);
}

svg { display: block; }
.defs { position: absolute; }

/* System menu bar */
.menubar {
  display: flex;
  justify-content: space-between;
  background: #172448;
  color: #e7e9ed;
  font-size: 26px;
  line-height: 45px;
  white-space: nowrap;
}
.menus {
  display: grid;
  grid-template-columns: 67px 236px 84px 89px 99px 128px 151px 105px 132px 84px 138px 60px;
  padding-left: 39px;
  letter-spacing: 0.1px;
}
.menus b { font-weight: 700; letter-spacing: 0.250px; }
.apple { margin-top: 6px; }
.status {
  display: grid;
  grid-template-columns: 75px 71px 69px 78px 82px 67px 64px 65px 69px 74px 55px 79px 62px 68px 135px 109px;
}
.pct { font-size: 21px; line-height: 48px; }

/* Browser window */
.window {
  display: flex;
  flex-direction: column;
  overflow: hidden;
  border: 2px solid;
  border-color: #626263 #5c5c5c #929292;
  border-radius: 20px;
  background: #3b3b3b;
  box-shadow: 0 0 0 1px #000, 0 6px 24px 4px rgba(0, 0, 0, .75);
}

.titlebar {
  display: flex;
  height: 78px;
  flex: none;
  background: #1b1b1b;
}
.lights {
  display: flex;
  gap: 16px;
  padding: 26px 0 0 40px;
}
.lights i { width: 24px; height: 24px; border-radius: 50%; }
.close { background: #ff5f57; }
.min { background: #febc2e; }
.max { background: #28c840; }
.spaces { margin: 32px 32px 0 58px; }
.tab {
  position: relative;
  display: flex;
  align-items: center;
  width: 480px;
  height: 64px;
  margin-top: 14px;
  padding: 0 24px 0 25px;
  border-radius: 10px 10px 0 0;
  background: #3b3b3b;
  color: #fff;
  font-size: 24px;
}
.tab::before, .tab::after {
  content: "";
  position: absolute;
  bottom: 0;
  width: 8px;
  height: 8px;
}
.tab::before { left: -8px; background: radial-gradient(circle at 0 0, #1b1b1b 8px, #3b3b3b 8.500px); }
.tab::after { right: -8px; background: radial-gradient(circle at 100% 0, #1b1b1b 8px, #3b3b3b 8.500px); }
.tab span { margin-left: 22px; flex: 1; }
.plus { margin: 31px 0 0 22px; }

.toolbar {
  display: flex;
  align-items: center;
  height: 76px;
  flex: none;
}
.nav {
  display: flex;
  gap: 44px;
  width: 374px;
  padding-left: 32px;
}
.address {
  display: flex;
  align-items: center;
  width: 1582px;
  height: 60px;
  padding: 0 18px 0 22px;
  border-radius: 10px;
  background: #2b2b2b;
  color: #fff;
  font-size: 28px;
}
.url { flex: 1; margin-left: 22px; }
.url em { color: #8f8f8f; font-style: normal; }
.tools {
  display: grid;
  align-items: center;
  grid-template-columns: 88px 88px 88px 70px 28px 88px 88px 88px 91px 93px 44px;
  padding-left: 34px;
}
.rule { width: 2px; height: 32px; background: #666; }
.rule.wide { width: 4px; }

.bookmarks {
  display: grid;
  grid-template-columns:
    49px 83px 49px 103px 49px 126px 49px 94px 49px 100px
    44px 36px 141px 45px 168px 64px 64px 49px 171px 64px 47px
    258px 50px 257px 46px 286px 37px 24px 49px 1fr;
  align-items: center;
  height: 64px;
  flex: none;
  padding: 0 0 8px 24px;
  color: #fff;
  font-size: 24px;
  letter-spacing: -0.250px;
  line-height: 55px;
  white-space: nowrap;
}
.bookmarks .long { letter-spacing: 0.050px; }

/* Web page */
.page {
  position: relative;
  flex: 1;
  padding-top: 119px;
  border-top: 2px solid #6b6b6b;
  background: #808080;
}
.card {
  width: 1516px;
  height: 1179px;
  margin: 0 auto;
  padding: 0 32px;
  border: 6px solid #000;
  background: #fff;
  color: #000;
  font-family: "Liberation Serif", "Times New Roman", serif;
  font-size: 32px;
  text-align: center;
}
.card h2 { margin: 39px 0 0; font-size: 48px; line-height: 55px; }
.card h3 { margin: 41px 0 0; font-size: 37.440px; line-height: 44px; text-align: left; }
.card p { margin: 37px 0 0; line-height: 36px; text-align: left; }
.card ul {
  display: flex;
  flex-direction: column;
  gap: 16px;
  width: 1456px;
  margin: 42px 0 0;
  padding: 0;
  list-style: none;
  font-size: 40px;
}
.card li { height: 62px; padding-top: 7px; line-height: 46px; }
.card li.hit { height: 66px; margin-left: 4px; border: 2px solid #000; }
.card button {
  width: 136px;
  height: 48px;
  margin-top: 39px;
  padding: 0;
  border: 2px solid #767676;
  border-radius: 5px;
  background: #efefef;
  color: #000;
  font: 32px "Liberation Sans", Arial, sans-serif;
}
.cursor { position: absolute; left: 2316px; top: 354px; }

/* Dock */
.dock {
  display: flex;
  height: 98px;
  margin: 4px 63px 0;
  padding-left: 3.500px;
  border: 2px solid #434b63;
  border-radius: 30px;
  background: #1d2540;
  box-shadow: 0 0 0 1px #0d1326;
  z-index: 1;
}
.app { position: relative; width: 80.900px; height: 94px; flex: none; }
.app svg { width: 100%; height: 94px; overflow: visible; }
.app.on::after {
  content: "";
  position: absolute;
  left: 50%;
  top: 84px;
  width: 8px;
  height: 8px;
  margin-left: -4px;
  border-radius: 50%;
  background: #9fa5bf;
}
.split { width: 2px; height: 70px; margin: 12px 17.500px 0; flex: none; background: #545b73; }
.serif { font-family: "Liberation Serif", serif; }
.mono { font-family: "Liberation Mono", monospace; font-weight: 700; }
.bd { fill: #f33d34; }
.bt { fill: #fff; font-size: 19px; text-anchor: middle; }
```
